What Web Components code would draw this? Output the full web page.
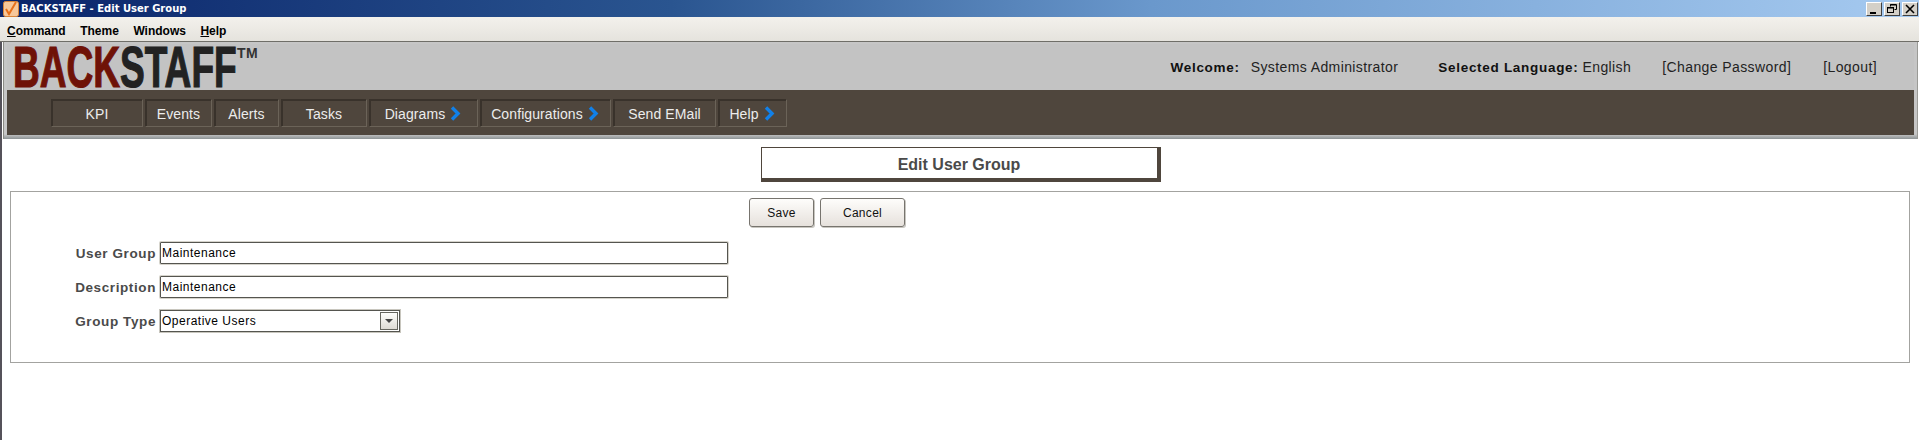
<!DOCTYPE html>
<html>
<head>
<meta charset="utf-8">
<title>BACKSTAFF - Edit User Group</title>
<style>
  html, body { margin: 0; padding: 0; background: #fff; height: 440px; overflow: hidden; }
  body { font-family: "Liberation Sans", Arial, sans-serif; }
</style>
</head>
<body>
<app-window></app-window>

<script>
// small helper so every element gets the same shadow setup
class Base extends HTMLElement {
  constructor() {
    super();
    this.attachShadow({ mode: 'open' });
  }
  connectedCallback() {
    this.shadowRoot.innerHTML = this.markup();
  }
}

class WinTitlebar extends Base {
  markup() {
    return `
      <style>
        :host { display: flex; align-items: center; height: 17px; box-sizing: border-box;
          background: linear-gradient(90deg, #0a246a 0%, #2a5590 35%, #6a98cc 60%, #a6caf0 100%); }
        .icon { width: 16px; height: 16px; margin: 0 2px 0 3px; flex: none; }
        .title { flex: 1; color: #fff; font: bold 10px "DejaVu Sans", sans-serif; white-space: nowrap; }
        .btns { display: flex; gap: 2px; margin-right: 1px; padding-top: 1px; }
        .btn { width: 16px; height: 14px; box-sizing: border-box; background: #d4d0c8;
          border: 1px solid; border-color: #fff #404040 #404040 #fff; display: block; }
        svg { display: block; }
      </style>
      <svg class="icon" viewBox="0 0 16 16">
        <rect x="0.5" y="0.5" width="15" height="15" rx="2" fill="#f7c79a" stroke="#d9853a"/>
        <path d="M3 8l3 5 7-12" fill="none" stroke="#e8701a" stroke-width="2"/>
      </svg>
      <div class="title">BACKSTAFF - Edit User Group</div>
      <div class="btns">
        <div class="btn"><svg width="14" height="12"><rect x="3" y="9" width="6" height="2" fill="#000"/></svg></div>
        <div class="btn"><svg width="14" height="12" fill="none" stroke="#000"><path d="M5.5 3.5V1.5h6v5h-2"/><rect x="2.5" y="4.5" width="6" height="5"/><path d="M5 2h6M3 5h5"/></svg></div>
        <div class="btn"><svg width="14" height="12" fill="none" stroke="#000" stroke-width="1.6"><path d="M3 2l8 8M11 2l-8 8"/></svg></div>
      </div>`;
  }
}

class WinMenubar extends Base {
  markup() {
    return `
      <style>
        :host { display: flex; align-items: center; height: 25px; padding: 3px 0 0 7px; box-sizing: border-box; gap: 14.5px;
          background: linear-gradient(#f3f1ec, #e5e3dd); border-bottom: 1px solid #6f6e68;
          font: bold 12px "Liberation Sans", sans-serif; color: #000; }
        u { text-decoration: underline; }
        span { white-space: nowrap; }
      </style>
      <span><u>C</u>ommand</span><span>Theme</span><span>Windows</span><span><u>H</u>elp</span>`;
  }
}

class AppLogo extends Base {
  markup() {
    return `
      <style>
        :host { display: block; width: 260px; height: 46px; flex: none; position: relative; }
        .word { display: block; width: 340px; transform: scaleX(0.65); transform-origin: 0 0; white-space: nowrap; margin-left: 1px;
          font: bold 57px/47px "Liberation Sans", sans-serif; color: #222; -webkit-text-stroke: 1.2px currentColor; }
        .back { color: #6f1207; }
        .tm { position: absolute; left: 225px; top: 2px; font: bold 14px/14px "Liberation Sans", sans-serif; color: #333; letter-spacing: 0.5px; }
      </style>
      <span class="word"><span class="back">BACK</span>STAFF</span><span class="tm">TM</span>`;
  }
}

class HeaderInfo extends Base {
  markup() {
    return `
      <style>
        :host { display: flex; align-items: center; margin-left: auto; padding-right: 37px; font-size: 14px; color: #222; white-space: nowrap; letter-spacing: 0.4px; }
        b { color: #111; font-size: 13.5px; letter-spacing: 0.7px; }
        .a { margin-left: 11px; }
        .c { margin-left: 40px; }
        .d { margin-left: 4px; }
        .e { margin-left: 31px; }
        .f { margin-left: 32px; }
      </style>
      <b>Welcome:</b><span class="a">Systems Administrator</span>
      <b class="c">Selected Language:</b><span class="d">English</span>
      <span class="e">[Change Password]</span><span class="f">[Logout]</span>`;
  }
}

class NavItem extends Base {
  markup() {
    const w = this.getAttribute('w');
    const arrow = this.hasAttribute('arrow') ? `
      <svg width="12" height="15" viewBox="0 0 12 15"><path d="M2 1.5l6 6-6 6" fill="none" stroke="#1180e8" stroke-width="3.4"/></svg>` : '';
    return `
      <style>
        :host { display: flex; align-items: center; justify-content: center; gap: 5px; box-sizing: border-box;
          width: ${w}px; height: 28px; padding-top: 1px; border: 1px solid; border-color: #39322b #6b6358 #6b6358 #39322b;
          box-shadow: 1px 1px 0 #39322b inset; color: #ececec; font-size: 14px; letter-spacing: 0.1px; white-space: nowrap; }
        svg { flex: none; }
      </style>
      <slot></slot>${arrow}`;
  }
}

class NavBar extends Base {
  markup() {
    return `
      <style>
        :host { display: flex; align-items: center; gap: 2px; height: 45px; padding: 1px 0 0 44px; box-sizing: border-box; background: #4f463d; }
      </style>
      <slot></slot>`;
  }
}

class AppHeader extends Base {
  markup() {
    return `
      <style>
        :host { display: block; margin: 0 1px 0 3px; padding: 2px 3px 4px 3px; box-sizing: border-box; height: 97px;
          background: linear-gradient(#c6c6c6 95%, #8e9496); border-left: 1px solid #8b8b85; border-right: 1px solid #9a9a96; }
        .top { display: flex; height: 46px; background: #c3c3c3; padding-left: 5px; align-items: center; }
      </style>
      <div class="top"><slot name="top"></slot></div>
      <slot name="nav"></slot>`;
  }
}

class PageTitle extends Base {
  markup() {
    return `
      <style>
        :host { display: block; width: 400px; height: 35px; box-sizing: border-box; margin: 8px auto 0;
          position: relative; left: 1px; background: #fff; border: 1px solid #4f463d; border-width: 1px 4px 4px 1px;
          text-align: center; font: bold 16px/33px "Liberation Sans", sans-serif; color: #4a4a4a; }
      </style>
      <slot></slot>`;
  }
}

class FormPanel extends Base {
  markup() {
    return `
      <style>
        :host { display: block; margin: 9px 9px 0 10px; height: 172px; box-sizing: border-box; border: 1px solid #a3a3a0; padding-top: 6px; background: #fff; }
        .btns { display: flex; gap: 6px; margin-bottom: 15px; padding-left: 738px; }
      </style>
      <div class="btns"><slot name="buttons"></slot></div>
      <slot></slot>`;
  }
}

class PushButton extends Base {
  markup() {
    return `
      <style>
        :host { display: flex; align-items: center; justify-content: center; box-sizing: border-box; height: 29px;
          width: ${this.getAttribute('w')}px; border: 1px solid #77746e; border-radius: 3px;
          background: linear-gradient(#fefdfb, #e6e1dc); box-shadow: 1px 1px 0 #c8c6c0;
          font-size: 12px; letter-spacing: 0.3px; color: #111; }
      </style>
      <slot></slot>`;
  }
}

class FormRow extends Base {
  markup() {
    return `
      <style>
        :host { display: flex; align-items: center; height: 22px; margin-bottom: 12px; }
        label { width: 149px; box-sizing: border-box; padding-right: 4px; text-align: right; flex: none;
          font: bold 13.5px "Liberation Sans", sans-serif; letter-spacing: 0.6px; color: #4a4a4a; white-space: nowrap; }
      </style>
      <label>${this.getAttribute('label')}</label><slot></slot>`;
  }
}

class TextField extends Base {
  markup() {
    return `
      <style>
        :host { display: flex; align-items: center; box-sizing: border-box; width: 568px; height: 22px; padding-left: 1px;
          border: 1px solid #55554f; border-radius: 1px; box-shadow: 0 0 0 1px #d6d4cc; background: #fff;
          font-size: 12px; letter-spacing: 0.5px; color: #000; white-space: nowrap; }
      </style>
      <slot></slot>`;
  }
}

class ComboField extends Base {
  markup() {
    return `
      <style>
        :host { display: flex; align-items: center; box-sizing: border-box; width: 240px; height: 22px; padding-left: 1px;
          border: 1px solid #55554f; box-shadow: 0 0 0 1px #c8c6be; background: #fff;
          font-size: 12px; letter-spacing: 0.5px; color: #000; white-space: nowrap; }
        span { flex: 1; }
        .arrow { display: flex; align-items: center; justify-content: center; box-sizing: border-box; width: 18px; height: 18px; margin-right: 1px;
          border: 1px solid #66665f; background: linear-gradient(#fdfdfb, #dedbd4); }
      </style>
      <span><slot></slot></span>
      <div class="arrow"><svg width="10" height="6"><path d="M1 1h8L5 5z" fill="#444"/></svg></div>`;
  }
}

class AppWindow extends Base {
  markup() {
    return `
      <style>
        :host { display: block; height: 440px; background: #fff; position: relative; }
        .edge { position: absolute; left: 0; top: 42px; bottom: 0; width: 2px; background: #55525a; }
      </style>
      <div class="edge"></div>
      <win-titlebar></win-titlebar>
      <win-menubar></win-menubar>
      <app-header>
        <app-logo slot="top"></app-logo>
        <header-info slot="top"></header-info>
        <nav-bar slot="nav">
          <nav-item w="92">KPI</nav-item>
          <nav-item w="67">Events</nav-item>
          <nav-item w="65">Alerts</nav-item>
          <nav-item w="86">Tasks</nav-item>
          <nav-item w="109" arrow>Diagrams</nav-item>
          <nav-item w="131" arrow>Configurations</nav-item>
          <nav-item w="103">Send EMail</nav-item>
          <nav-item w="69" arrow>Help</nav-item>
        </nav-bar>
      </app-header>
      <page-title>Edit User Group</page-title>
      <form-panel>
        <push-button slot="buttons" w="65">Save</push-button>
        <push-button slot="buttons" w="85">Cancel</push-button>
        <form-row label="User Group"><text-field>Maintenance</text-field></form-row>
        <form-row label="Description"><text-field>Maintenance</text-field></form-row>
        <form-row label="Group Type"><combo-field>Operative Users</combo-field></form-row>
      </form-panel>`;
  }
}

customElements.define('win-titlebar', WinTitlebar);
customElements.define('win-menubar', WinMenubar);
customElements.define('app-logo', AppLogo);
customElements.define('header-info', HeaderInfo);
customElements.define('nav-item', NavItem);
customElements.define('nav-bar', NavBar);
customElements.define('app-header', AppHeader);
customElements.define('page-title', PageTitle);
customElements.define('form-panel', FormPanel);
customElements.define('push-button', PushButton);
customElements.define('form-row', FormRow);
customElements.define('text-field', TextField);
customElements.define('combo-field', ComboField);
customElements.define('app-window', AppWindow);
</script>
</body>
</html>
